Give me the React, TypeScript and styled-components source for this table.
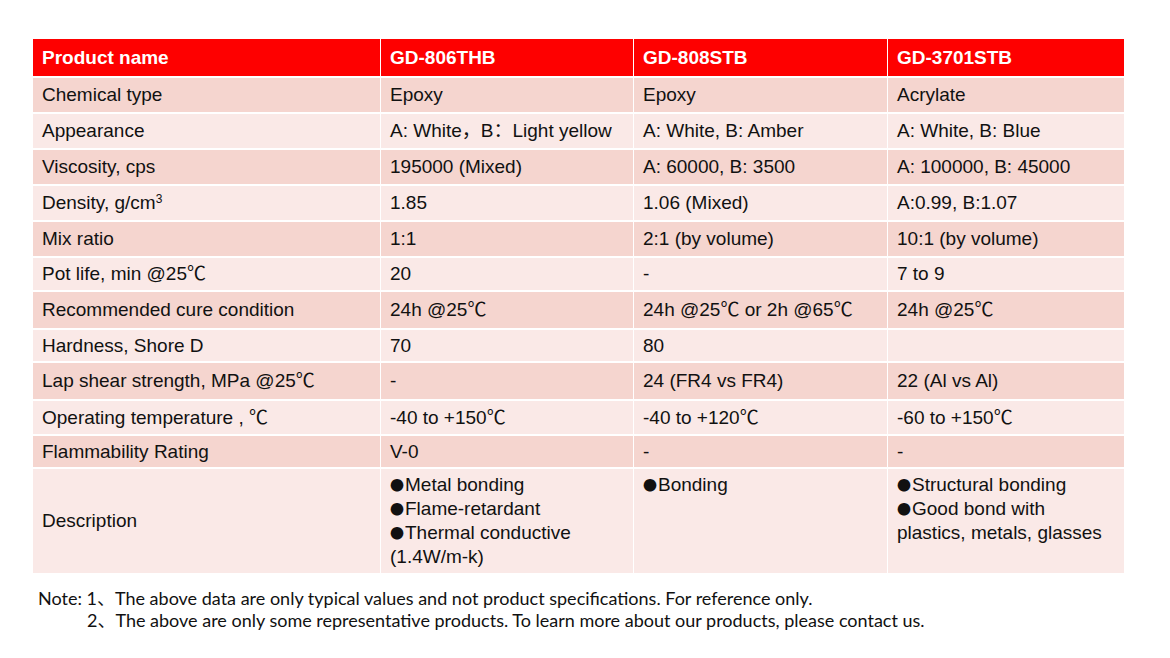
import React from "react";
import styled, { createGlobalStyle } from "styled-components";

const Global = createGlobalStyle`
  html, body { margin: 0; padding: 0; background: #ffffff; }
  body { width: 1170px; height: 658px; overflow: hidden; }
`;

const Page = styled.div`
  padding: 39px 0 0 33px;
  width: 1091px;
  font-family: "Liberation Sans", Arial, "Noto Sans CJK SC", sans-serif;
`;

const Table = styled.div`
  display: flex;
  flex-direction: column;
  gap: 2px;
  width: 1091px;
`;

const Row = styled.div<{ $h: number }>`
  display: grid;
  grid-template-columns: 347px 252px 253px 236px;
  column-gap: 1px;
  height: ${(p) => p.$h}px;
`;

const Cell = styled.div<{ $bg: string; $head?: boolean; $top?: boolean }>`
  background: ${(p) => p.$bg};
  color: ${(p) => (p.$head ? "#ffffff" : "#111111")};
  font-weight: ${(p) => (p.$head ? 700 : 400)};
  font-size: 19px;
  line-height: 24px;
  padding: ${(p) => (p.$top ? "4px 9px 0 9px" : "0 9px")};
  display: flex;
  flex-direction: column;
  justify-content: ${(p) => (p.$top ? "flex-start" : "center")};
  white-space: nowrap;
  overflow: hidden;
`;

const DescLine = styled.div`
  height: 24px;
  line-height: 24px;
`;

const Sup = styled.span`
  font-size: 12px;
  vertical-align: 6px;
  line-height: 0;
`;

const Bullet = styled.span`
  font-family: "Noto Sans CJK SC", sans-serif;
  font-size: 14px;
  line-height: 0;
  vertical-align: 1px;
  margin-right: 1px;
`;

const Notes = styled.div`
  margin: 14px 0 0 5px;
  font-family: Lato, "Open Sans", "Noto Sans CJK SC", sans-serif;
  font-size: 18px;
  line-height: 22px;
  color: #111111;
`;

const NoteLine = styled.div<{ $indent?: boolean }>`
  padding-left: ${(p) => (p.$indent ? "49px" : "0")};
  white-space: nowrap;
`;

const RED = "#fe0000";
const DARK = "#f5d5cf";
const LIGHT = "#fae9e7";

type R = { h: number; cells: React.ReactNode[] };

const rows: R[] = [
  { h: 34, cells: ["Chemical type", "Epoxy", "Epoxy", "Acrylate"] },
  { h: 34, cells: ["Appearance", "A: White，B：Light yellow", "A: White, B: Amber", "A: White, B: Blue"] },
  { h: 34, cells: ["Viscosity, cps", "195000 (Mixed)", "A: 60000, B: 3500", "A: 100000, B: 45000"] },
  {
    h: 34,
    cells: [
      <span key="d">
        Density, g/cm<Sup>3</Sup>
      </span>,
      "1.85",
      "1.06 (Mixed)",
      "A:0.99, B:1.07",
    ],
  },
  { h: 34, cells: ["Mix ratio", "1:1", "2:1 (by volume)", "10:1 (by volume)"] },
  { h: 32, cells: ["Pot life, min @25℃", "20", "-", "7 to 9"] },
  { h: 36, cells: ["Recommended cure condition", "24h @25℃", "24h @25℃ or 2h @65℃", "24h @25℃"] },
  { h: 31, cells: ["Hardness, Shore D", "70", "80", ""] },
  { h: 36, cells: ["Lap shear strength, MPa @25℃", "-", "24 (FR4 vs FR4)", "22 (Al vs Al)"] },
  { h: 33, cells: ["Operating temperature , ℃", "-40 to +150℃", "-40 to +120℃", "-60 to +150℃"] },
  { h: 31, cells: ["Flammability Rating", "V-0", "-", "-"] },
];

type Line = { b: boolean; t: string };

const desc: Line[][] = [
  [
    { b: true, t: "Metal bonding" },
    { b: true, t: "Flame-retardant" },
    { b: true, t: "Thermal conductive" },
    { b: false, t: "(1.4W/m-k)" },
  ],
  [{ b: true, t: "Bonding" }],
  [
    { b: true, t: "Structural bonding" },
    { b: true, t: "Good bond with" },
    { b: false, t: "plastics, metals, glasses" },
  ],
];

export default function App() {
  return (
    <>
      <Global />
      <Page>
        <Table>
          <Row $h={37}>
            {["Product name", "GD-806THB", "GD-808STB", "GD-3701STB"].map((t) => (
              <Cell key={t} $bg={RED} $head>
                {t}
              </Cell>
            ))}
          </Row>
          {rows.map((r, i) => (
            <Row key={i} $h={r.h}>
              {r.cells.map((c, j) => (
                <Cell key={j} $bg={i % 2 === 0 ? DARK : LIGHT}>
                  {c}
                </Cell>
              ))}
            </Row>
          ))}
          <Row $h={104}>
            <Cell $bg={LIGHT}>Description</Cell>
            {desc.map((lines, j) => (
              <Cell key={j} $bg={LIGHT} $top>
                {lines.map((l) => (
                  <DescLine key={l.t}>
                    {l.b && <Bullet>●</Bullet>}
                    {l.t}
                  </DescLine>
                ))}
              </Cell>
            ))}
          </Row>
        </Table>
        <Notes>
          <NoteLine>Note: 1、The above data are only typical values and not product specifications. For reference only.</NoteLine>
          <NoteLine $indent>2、The above are only some representative products. To learn more about our products, please contact us.</NoteLine>
        </Notes>
      </Page>
    </>
  );
}
